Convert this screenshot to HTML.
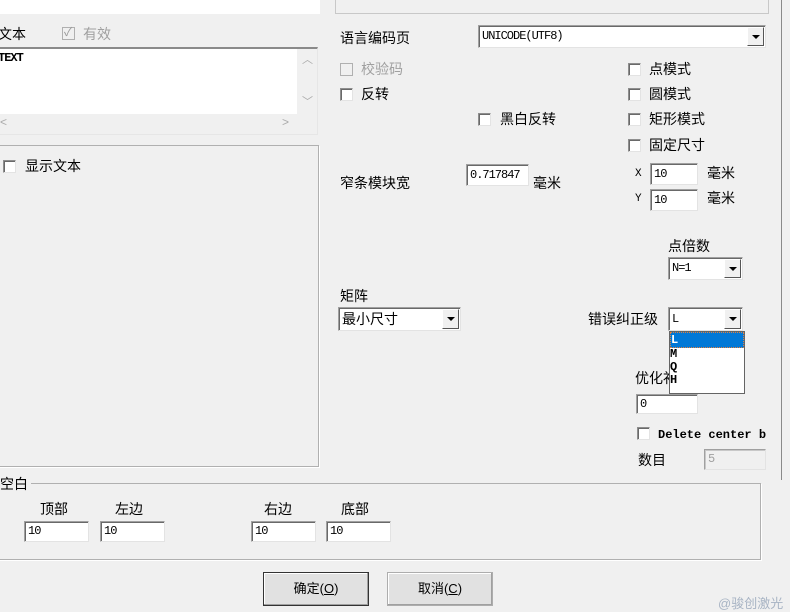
<!DOCTYPE html>
<html><head><meta charset="utf-8"><style>
*{box-sizing:border-box;margin:0;padding:0}
body{width:790px;height:610px;background:#f0f0f0;position:relative;overflow:hidden;font-family:"Liberation Sans","Noto Sans CJK SC",sans-serif;font-size:14px;color:#000}
.a{position:absolute;white-space:nowrap;line-height:16px}
.dis{color:#a0a0a0}
.inp{position:absolute;background:#fff;border:1px solid #a0a0a0;border-right-color:#e3e3e3;border-bottom-color:#e3e3e3;box-shadow:inset 1px 1px 0 #696969;font-family:"Liberation Mono",monospace;font-size:12px;line-height:20px;padding-left:3px;letter-spacing:-1px}
.inp.d{background:#f0f0f0;color:#a0a0a0;box-shadow:inset 1px 1px 0 #c8c8c8}
.cb{position:absolute;width:13px;height:13px;background:#fff;border:1px solid #8e8e8e;border-right-color:#e3e3e3;border-bottom-color:#e3e3e3;box-shadow:inset 1px 1px 0 #696969}
.cb.d{background:#f0f0f0;box-shadow:none;border-color:#b0b0b0}
.btn{position:absolute;width:17px;top:1px;right:1px;bottom:1px;background:#f0f0f0;border:1px solid #fff;border-right-color:#555;border-bottom-color:#555}
.btn:after{content:"";position:absolute;left:4px;top:7px;border-left:4px solid transparent;border-right:4px solid transparent;border-top:4px solid #000}
.pb{position:absolute;background:#e1e1e1;border:1px solid #adadad;box-shadow:inset -1px -1px 0 #a0a0a0, inset 1px 1px 0 #fff;font-size:13px;text-align:center;line-height:32px}
</style></head><body>
<div style="position:absolute;left:0;top:0;width:320px;height:14px;background:#fff"></div>
<div style="position:absolute;left:335px;top:-2px;width:434px;height:16px;border:1px solid #c8c8c8;border-top:none"></div>
<div style="position:absolute;left:781px;top:0;width:1px;height:480px;background:#8a8a8a"></div>

<div class="a" style="left:-2px;top:26px">文本</div>
<div class="cb d" style="left:62px;top:27px"></div><div class="a dis" style="left:64px;top:24px;font-size:12px;color:#999">✓</div>
<div class="a dis" style="left:83px;top:26px">有效</div>
<div style="position:absolute;left:0;top:47px;width:318px;height:88px;background:#f0f0f0;border-top:2px solid #8a8a8a;border-bottom:1px solid #e6e6e6;border-right:1px solid #e6e6e6"></div>
<div style="position:absolute;left:0;top:49px;width:297px;height:65px;background:#fff"></div>
<div class="a" style="left:-2px;top:50px;font-family:'Liberation Mono',monospace;font-size:12px;font-weight:bold;letter-spacing:-1px">TEXT</div>
<div class="a" style="left:302px;top:52px;color:#aaa;font-size:11px">︿</div>
<div class="a" style="left:302px;top:94px;color:#aaa;font-size:11px">﹀</div>
<div class="a" style="left:0;top:114px;color:#aaa;font-size:12px">&lt;</div>
<div class="a" style="left:282px;top:114px;color:#aaa;font-size:12px">&gt;</div>

<div style="position:absolute;left:-2px;top:145px;width:321px;height:322px;border:1px solid #b0b0b0;box-shadow:1px 1px 0 #fff"></div>
<div class="cb" style="left:3px;top:160px"></div><div class="a" style="left:25px;top:158px">显示文本</div>

<div class="a" style="left:340px;top:30px">语言编码页</div>
<div class="inp" style="left:478px;top:25px;width:288px;height:23px;line-height:21px">UNICODE(UTF8)<div class="btn"></div></div>
<div class="cb d" style="left:340px;top:63px"></div><div class="a dis" style="left:361px;top:61px">校验码</div>
<div class="cb" style="left:340px;top:88px"></div><div class="a" style="left:361px;top:86px">反转</div>
<div class="cb" style="left:478px;top:113px"></div><div class="a" style="left:500px;top:111px">黑白反转</div>
<div class="cb" style="left:628px;top:63px"></div><div class="a" style="left:649px;top:61px">点模式</div>
<div class="cb" style="left:628px;top:88px"></div><div class="a" style="left:649px;top:86px">圆模式</div>
<div class="cb" style="left:628px;top:113px"></div><div class="a" style="left:649px;top:111px">矩形模式</div>
<div class="cb" style="left:628px;top:139px"></div><div class="a" style="left:649px;top:137px">固定尺寸</div>
<div class="a" style="left:340px;top:175px">窄条模块宽</div>
<div class="inp" style="left:466px;top:164px;width:63px;height:22px">0.717847</div>
<div class="a" style="left:533px;top:175px">毫米</div>
<div class="a" style="left:635px;top:166px;font-family:'Liberation Mono',monospace;font-size:11px">X</div>
<div class="inp" style="left:650px;top:163px;width:48px;height:22px">10</div>
<div class="a" style="left:707px;top:165px">毫米</div>
<div class="a" style="left:635px;top:191px;font-family:'Liberation Mono',monospace;font-size:11px">Y</div>
<div class="inp" style="left:650px;top:189px;width:48px;height:22px">10</div>
<div class="a" style="left:707px;top:190px">毫米</div>

<div class="a" style="left:668px;top:238px">点倍数</div>
<div class="inp" style="left:668px;top:257px;width:75px;height:23px;line-height:21px">N=1<div class="btn"></div></div>
<div class="a" style="left:340px;top:288px">矩阵</div>
<div class="inp" style="left:338px;top:307px;width:123px;height:24px;line-height:22px;font-family:'Liberation Sans','Noto Sans CJK SC',sans-serif;font-size:14px;letter-spacing:0">最小尺寸<div class="btn"></div></div>
<div class="a" style="left:588px;top:311px">错误纠正级</div>
<div class="inp" style="left:668px;top:307px;width:75px;height:24px;line-height:22px">L<div class="btn"></div></div>
<div style="position:absolute;left:669px;top:331px;width:76px;height:63px;background:#fff;border:1px solid #646464;font-family:'Liberation Mono',monospace;font-size:12px;font-weight:bold;line-height:14px">
<div style="background:#0078d7;color:#fff;border:1px dotted #e08040;height:16px;line-height:14px">L</div>
<div style="margin-top:-1px">M</div><div style="line-height:12px">Q</div><div style="line-height:14px">H</div></div>
<div class="a" style="left:635px;top:370px">优化</div><div class="a" style="left:663px;top:370px;width:6px;overflow:hidden">补</div>
<div class="inp" style="left:636px;top:394px;width:62px;height:20px;line-height:18px">0</div>
<div class="cb" style="left:637px;top:427px"></div>
<div class="a" style="left:658px;top:427px;font-family:'Liberation Mono',monospace;font-size:12px;font-weight:bold">Delete center b</div>
<div class="a" style="left:638px;top:452px">数目</div>
<div class="inp d" style="left:704px;top:449px;width:62px;height:21px;line-height:19px">5</div>

<div style="position:absolute;left:-2px;top:483px;width:763px;height:77px;border:1px solid #b0b0b0;box-shadow:1px 1px 0 #fff"></div>
<div class="a" style="left:0;top:476px;background:#f0f0f0;padding-right:3px">空白</div>
<div class="a" style="left:40px;top:501px">顶部</div>
<div class="a" style="left:115px;top:501px">左边</div>
<div class="a" style="left:264px;top:501px">右边</div>
<div class="a" style="left:341px;top:501px">底部</div>
<div class="inp" style="left:24px;top:521px;width:65px;height:21px;line-height:19px">10</div>
<div class="inp" style="left:100px;top:521px;width:65px;height:21px;line-height:19px">10</div>
<div class="inp" style="left:251px;top:521px;width:65px;height:21px;line-height:19px">10</div>
<div class="inp" style="left:326px;top:521px;width:65px;height:21px;line-height:19px">10</div>

<div class="pb" style="left:263px;top:572px;width:106px;height:34px;border:1px solid #333">确定(<u>O</u>)</div>
<div class="pb" style="left:387px;top:572px;width:106px;height:34px">取消(<u>C</u>)</div>
<div class="a" style="left:718px;top:596px;color:#a8b4c4;font-size:13px">@骏创激光</div>
</body></html>
